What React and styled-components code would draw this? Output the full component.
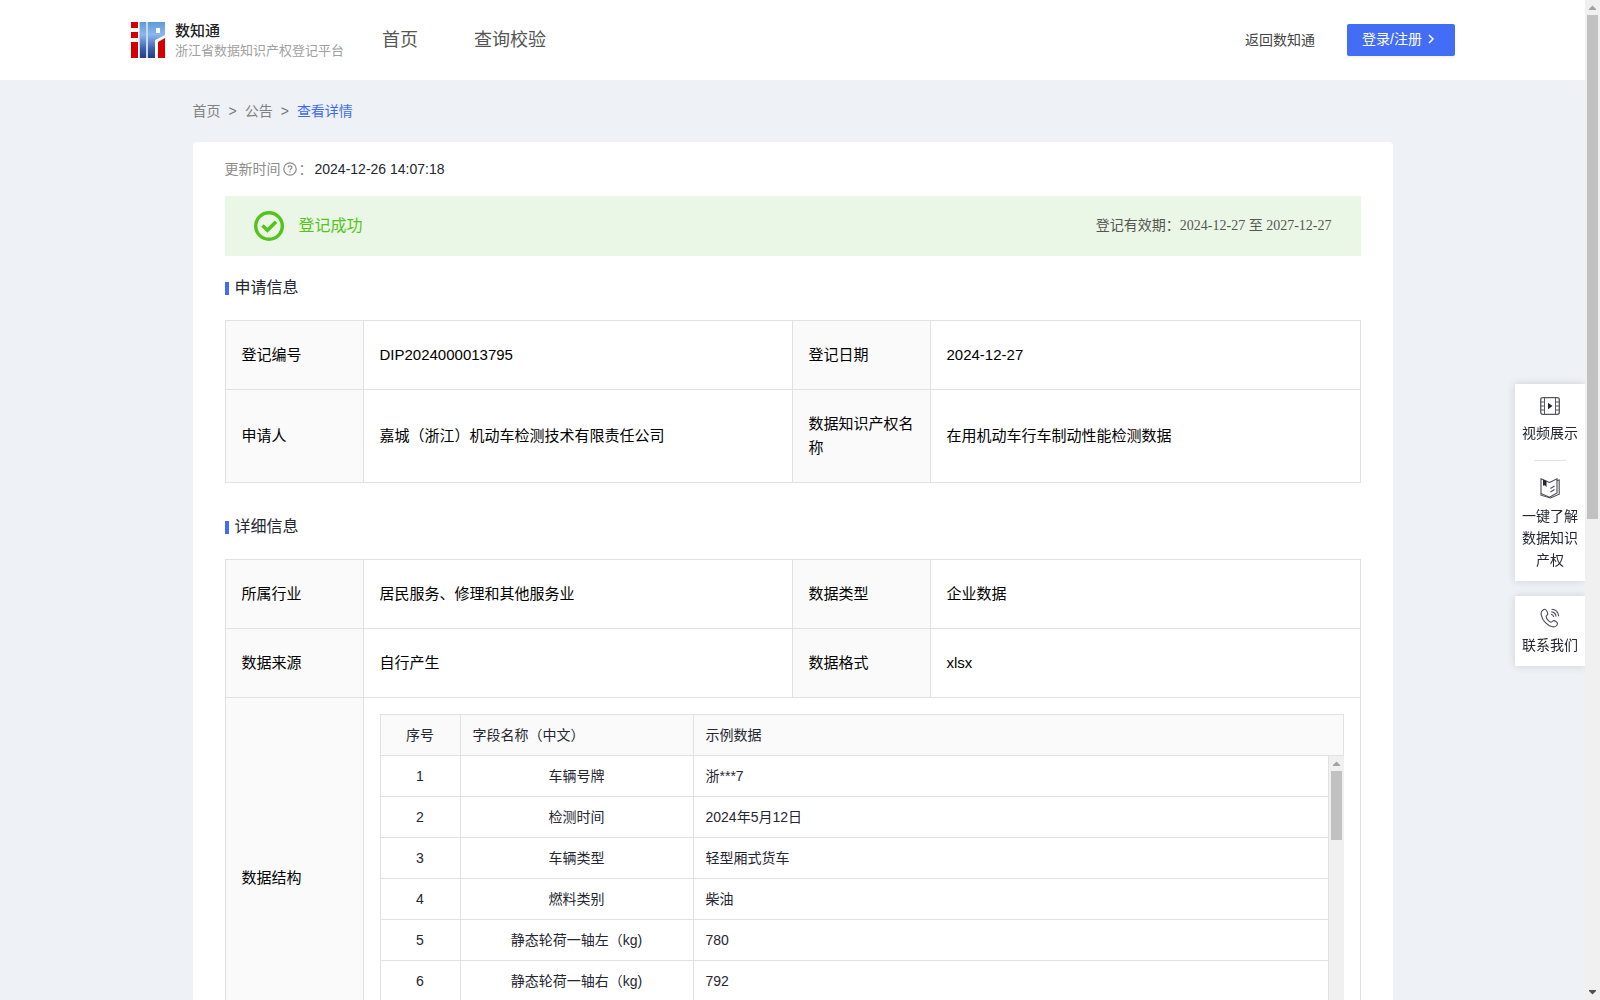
import styled, { createGlobalStyle } from "styled-components";

const GlobalStyle = createGlobalStyle`
    *{
        box-sizing: border-box;
    }

    body{
        margin: 0;
        font-family: "Liberation Sans", "Noto Sans CJK SC", sans-serif;
        font-size: 14px;
        line-height: 22px;
        color: #252631;
    }
`;

const Window = styled.div`
    display: flex;
    height: 100vh;
    background: #eef2f6;
`;

const Page = styled.div`
    flex: 1;
    min-width: 0;
    overflow-y: auto;
    scrollbar-width: none;
`;

/* ===== Barra de rolagem ===== */
const Track = styled.div`
    display: flex;
    flex-direction: column;
    align-items: center;
    flex: none;
    width: 15px;
    background: #f0f0f0;
    z-index: 2;

    svg{
        flex: none;
    }
`;

const TrackBody = styled.div`
    flex: 1;
    width: 11px;
`;

const Thumb = styled.div`
    height: ${({ $size }) => $size};
    background: #c1c1c1;
`;

const Header = styled.header`
    display: flex;
    align-items: center;
    height: 80px;
    padding: 0 130px;
    background: #fff;
`;

const Brand = styled.a`
    display: flex;
    align-items: center;
    gap: 10px;
    width: 252px;
    color: #222;
    text-decoration: none;
    white-space: nowrap;
`;

const BrandText = styled.span`
    display: flex;
    flex-direction: column;
    padding-top: 2px;
`;

const BrandName = styled.strong`
    font-size: 15px;
    font-weight: 500;
    line-height: 20px;
`;

const BrandSub = styled.span`
    font-size: 13px;
    line-height: 20px;
    color: #a0a0a0;
`;

const Nav = styled.nav`
    display: flex;
    flex: 1;
    gap: 56px;
`;

const NavLink = styled.a`
    font-size: 18px;
    line-height: 28px;
    color: #555;
    text-decoration: none;
`;

const BackLink = styled.a`
    margin-right: 32px;
    color: #444;
    text-decoration: none;
`;

const LoginButton = styled.button`
    display: flex;
    align-items: center;
    gap: 4px;
    width: 108px;
    height: 32px;
    padding: 0 15px 2px;
    border: none;
    border-radius: 2px;
    box-shadow: 0 2px 0 rgba(0,0,0,0.04);
    background: #446df6;
    color: #fff;
    font: inherit;
    white-space: nowrap;
    cursor: pointer;
`;

const Content = styled.main`
    width: 1200px;
    max-width: 100%;
    margin: 0 auto;
    padding-bottom: 40px;
`;

const Breadcrumb = styled.nav`
    display: flex;
    align-items: center;
    gap: 8px;
    height: 62px;
    color: #777;
`;

const Crumb = styled.a`
    color: ${({ $active }) => ($active ? "#3c6cf6" : "#808080")};
    text-decoration: none;
`;

const Card = styled.section`
    padding: 16px 32px 20px;
    border-radius: 4px;
    background: #fff;
`;

const UpdateTime = styled.div`
    display: flex;
    align-items: center;
    gap: 2px;
    height: 22px;
    margin-bottom: 16px;
    color: #8c8c8c;

    time{
        color: #252631;
    }
`;

const Banner = styled.div`
    display: flex;
    align-items: center;
    height: 60px;
    padding: 0 29px;
    background: #ebf7e6;
`;

const BannerState = styled.span`
    flex: 1;
    margin-left: 15px;
    font-size: 16px;
    color: #52c41a;
`;

const Validity = styled.span`
    font-family: "Liberation Serif", "Noto Sans CJK SC", serif;
    color: #555;
`;

const SectionTitle = styled.h2`
    display: flex;
    align-items: center;
    gap: 6px;
    height: 64px;
    margin: 0;
    font-size: 16px;
    font-weight: 400;

    &::before{
        content: "";
        width: 4px;
        height: 13px;
        background: #446df6;
    }
`;

const InfoTable = styled.table`
    width: 100%;
    margin-bottom: 12px;
    border-collapse: collapse;
    table-layout: fixed;
    font-size: 15px;
    line-height: 24px;
    color: #000;
`;

const LabelCol = styled.col`
    width: 138px;
`;

const ValueCol = styled.col`
    width: 429px;
`;

const Label = styled.th`
    padding: 22px 16px;
    border: solid 1px #e1e1e1;
    background: #fafafa;
    font-weight: 400;
    text-align: left;
`;

const Value = styled.td`
    padding: ${({ $nested }) => ($nested ? "16px" : "22px 16px")};
    border: solid 1px #e1e1e1;
`;

const FieldTable = styled.table`
    width: 100%;
    border-spacing: 0;
    table-layout: fixed;
    font-size: 14px;
    line-height: 22px;
    color: #252631;

    th, td{
        height: 41px;
        padding: 0 12px;
        border: solid #e1e1e1;
        border-width: 0 1px 1px 0;
        font-weight: 400;
        text-align: left;
    }

    th{
        height: 42px;
        border-top-width: 1px;
        background: #fafafa;
    }

    th:first-child, td:first-child{
        width: 81px;
        border-left-width: 1px;
        text-align: center;
    }

    th:nth-child(2), td:nth-child(2){
        width: 233px;
    }

    td:nth-child(2){
        text-align: center;
    }
`;

const FieldBody = styled.div`
    display: flex;
    height: 286px;
`;

const FieldScroll = styled.div`
    flex: 1;
    min-width: 0;
    overflow-y: auto;
    scrollbar-width: none;
`;

const SideBar = styled.aside`
    position: fixed;
    top: 384px;
    right: 15px;
    display: flex;
    flex-direction: column;
    gap: 15px;
    width: 70px;
    z-index: 1;
`;

const SideCard = styled.div`
    display: flex;
    flex-direction: column;
    align-items: center;
    padding: 12px 6px 10px;
    background: #fff;
    box-shadow: 0 0 8px rgba(0,0,0,0.15);
`;

const SideLink = styled.a`
    display: flex;
    flex-direction: column;
    align-items: center;
    gap: 6px;
    color: #252631;
    text-align: center;
    text-decoration: none;
`;

const Divider = styled.hr`
    width: 32px;
    margin: 16px 0;
    border: none;
    border-top: solid 1px #e1e1e1;
`;

const fields = [
    ["车辆号牌", "浙***7"],
    ["检测时间", "2024年5月12日"],
    ["车辆类型", "轻型厢式货车"],
    ["燃料类别", "柴油"],
    ["静态轮荷一轴左（kg)", "780"],
    ["静态轮荷一轴右（kg)", "792"],
];

const applyRows = [
    ["登记编号", "DIP2024000013795", "登记日期", "2024-12-27"],
    ["申请人", "嘉城（浙江）机动车检测技术有限责任公司", "数据知识产权名称", "在用机动车行车制动性能检测数据"],
];

const detailRows = [
    ["所属行业", "居民服务、修理和其他服务业", "数据类型", "企业数据"],
    ["数据来源", "自行产生", "数据格式", "xlsx"],
];

function Logo(){
    return (
        <svg width="35" height="36" viewBox="0 0 35 36" aria-hidden="true">
            <defs>
                <linearGradient id="logoBlue" x1="0" y1="0" x2="0" y2="36" gradientUnits="userSpaceOnUse">
                    <stop offset="0" stopColor="#5f98da" />
                    <stop offset="0.35" stopColor="#8ab8ec" />
                    <stop offset="0.75" stopColor="#3c5dab" />
                    <stop offset="1" stopColor="#263b85" />
                </linearGradient>
            </defs>
            <path d="M9 0H35V13L25 18V36H9Z" fill="#c9daf0" />
            <path d="M1 0H8V6H1ZM1 10H8V16H1ZM1 20H8V36H1ZM28 20L35 16V36H28Z" fill="#d40000" />
            <path d="M10 0H16V36H10ZM18 0H35V13L25 18V36H18ZM26 6V11H30V6Z" fillRule="evenodd" fill="url(#logoBlue)" />
            <path d="M26 6H30V11H26Z" fill="#fff" />
        </svg>
    )
}

function QuestionIcon(){
    return (
        <svg width="14" height="14" viewBox="0 0 14 14" fill="none" stroke="#8c8c8c" strokeWidth="1.2" aria-hidden="true">
            <circle cx="7" cy="7" r="6.2" />
            <path d="M5.1 5.6C5.1 3.2 8.9 3.2 8.9 5.5C8.9 6.8 7 6.8 7 8.3M7 9.3V10.5" />
        </svg>
    )
}

function SuccessIcon(){
    return (
        <svg width="30" height="30" viewBox="0 0 30 30" fill="none" stroke="#52c41a" aria-hidden="true">
            <circle cx="15" cy="15" r="13.3" strokeWidth="3.4" />
            <path d="M8.5 14.5L13.5 19.3L22 10.8" strokeWidth="3.6" />
        </svg>
    )
}

function VideoIcon(){
    return (
        <svg width="20" height="20" viewBox="0 0 20 20" fill="none" stroke="#55565f" aria-hidden="true">
            <rect x="0.7" y="1.7" width="18.6" height="16.6" rx="2" strokeWidth="1.3" />
            <path d="M4.5 2V18M15.5 2V18M1 6H4.5M1 10H4.5M1 14H4.5M15.5 6H19M15.5 10H19M15.5 14H19" />
            <path d="M8 6.8L12.5 10L8 13.2Z" fill="#252631" stroke="none" />
        </svg>
    )
}

function BookIcon(){
    return (
        <svg width="20" height="22" viewBox="0 0 20 22" fill="none" stroke="#4a4b55" strokeWidth="1.1" aria-hidden="true">
            <path d="M9.5 5.5L1 1.8V16.5L9.5 20.2L17 16V1.8L9.5 5.5" />
            <path d="M17 3.5L19.2 3V17.2L10.5 21L1 18.2V16.5M10.5 11.5L14.5 9M10.5 15L14.5 12.5" />
            <path d="M3 2.5L6.5 4V10L4.8 8.2L3 8.8Z" fill="#252631" stroke="none" />
        </svg>
    )
}

function PhoneIcon(){
    return (
        <svg width="20" height="20" viewBox="0 0 20 20" fill="none" stroke="#4a4b55" strokeWidth="1.1" aria-hidden="true">
            <path d="M4.5 1.3C2 2.2 0.8 4.3 1.2 6.8C2.3 12.5 6.8 17.4 12.5 18.8C15 19.2 17 17.7 17.5 15.5C17.6 14.4 14.6 12.3 13.3 12.7C12.2 13 12 14.4 10.8 14.2C8.5 13.2 6.6 11 6.1 8.7C6.1 7.6 7.7 7.3 7.8 6C7.8 4.6 6 0.9 4.5 1.3Z" />
            <path d="M11.5 1.3C15.5 1.5 18.3 4.3 18.7 8.3M11.3 3.9C14 4.1 15.8 5.9 16.1 8.5M11 6.3C12.6 6.5 13.5 7.4 13.7 9" />
        </svg>
    )
}

function Scrollbar({ size }){
    return (
        <Track aria-hidden="true">
            <svg width="15" height="15" viewBox="0 0 15 15">
                <path d="M4 10V9L7.5 5.5L11 9V10Z" fill="#a3a3a3" />
            </svg>
            <TrackBody>
                <Thumb $size={size} />
            </TrackBody>
            <svg width="15" height="15" viewBox="0 0 15 15">
                <path d="M4 5V6L7.5 9.5L11 6V5Z" fill="#505050" />
            </svg>
        </Track>
    )
}

function InfoRow({ cells }){
    return (
        <tr>
            <Label scope="row">{cells[0]}</Label>
            <Value>{cells[1]}</Value>
            <Label scope="row">{cells[2]}</Label>
            <Value>{cells[3]}</Value>
        </tr>
    )
}

function InfoCols(){
    return (
        <colgroup>
            <LabelCol />
            <ValueCol />
            <LabelCol />
            <col />
        </colgroup>
    )
}

export default function App(){
    return (
        <Window>
            <GlobalStyle />
            <Page>
                <Header>
                    <Brand href="#">
                        <Logo />
                        <BrandText>
                            <BrandName>数知通</BrandName>
                            <BrandSub>浙江省数据知识产权登记平台</BrandSub>
                        </BrandText>
                    </Brand>
                    <Nav>
                        <NavLink href="#">首页</NavLink>
                        <NavLink href="#">查询校验</NavLink>
                    </Nav>
                    <BackLink href="#">返回数知通</BackLink>
                    <LoginButton type="button">
                        登录/注册
                        <svg width="10" height="10" viewBox="0 0 10 10" fill="none" stroke="#fff" strokeWidth="1.5" aria-hidden="true">
                            <path d="M3 1L7 5L3 9" />
                        </svg>
                    </LoginButton>
                </Header>

                <Content>
                    <Breadcrumb>
                        <Crumb href="#">首页</Crumb>
                        &gt;
                        <Crumb href="#">公告</Crumb>
                        &gt;
                        <Crumb href="#" $active>查看详情</Crumb>
                    </Breadcrumb>

                    <Card>
                        <UpdateTime>
                            <span>更新时间</span>
                            <QuestionIcon />
                            <span>：</span>
                            <time>2024-12-26 14:07:18</time>
                        </UpdateTime>
                        <Banner>
                            <SuccessIcon />
                            <BannerState>登记成功</BannerState>
                            <Validity>登记有效期：2024-12-27 至 2027-12-27</Validity>
                        </Banner>

                        <SectionTitle>申请信息</SectionTitle>
                        <InfoTable>
                            <InfoCols />
                            <tbody>
                                {applyRows.map((cells) => <InfoRow key={cells[0]} cells={cells} />)}
                            </tbody>
                        </InfoTable>

                        <SectionTitle>详细信息</SectionTitle>
                        <InfoTable>
                            <InfoCols />
                            <tbody>
                                {detailRows.map((cells) => <InfoRow key={cells[0]} cells={cells} />)}
                                <tr>
                                    <Label scope="row">数据结构</Label>
                                    <Value colSpan={3} $nested>
                                        <FieldTable>
                                            <thead>
                                                <tr>
                                                    <th>序号</th>
                                                    <th>字段名称（中文）</th>
                                                    <th>示例数据</th>
                                                </tr>
                                            </thead>
                                        </FieldTable>
                                        <FieldBody>
                                            <FieldScroll>
                                                <FieldTable>
                                                    <tbody>
                                                        {fields.map(([name, sample], idx) => (
                                                            <tr key={name}>
                                                                <td>{idx + 1}</td>
                                                                <td>{name}</td>
                                                                <td>{sample}</td>
                                                            </tr>
                                                        ))}
                                                    </tbody>
                                                </FieldTable>
                                            </FieldScroll>
                                            <Scrollbar size="27%" />
                                        </FieldBody>
                                    </Value>
                                </tr>
                            </tbody>
                        </InfoTable>
                    </Card>
                </Content>

                <SideBar>
                    <SideCard>
                        <SideLink href="#"><VideoIcon />视频展示</SideLink>
                        <Divider />
                        <SideLink href="#"><BookIcon />一键了解数据知识产权</SideLink>
                    </SideCard>
                    <SideCard>
                        <SideLink href="#"><PhoneIcon />联系我们</SideLink>
                    </SideCard>
                </SideBar>
            </Page>
            <Scrollbar size="52%" />
        </Window>
    )
}
